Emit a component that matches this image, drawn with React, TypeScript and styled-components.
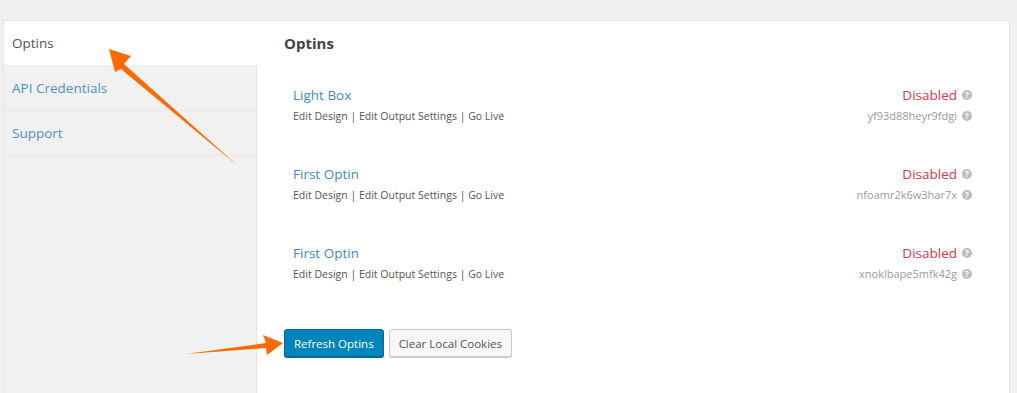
import React from "react";
import styled, { createGlobalStyle } from "styled-components";

const Global = createGlobalStyle`
  html, body { margin: 0; padding: 0; background: #f0f0f1; }
  body { font-family: "Open Sans", "Noto Sans", sans-serif; }
`;

const Page = styled.div`
  position: relative;
  width: 1017px;
  height: 393px;
  overflow: hidden;
  background: #f0f0f1;
  padding: 20px 7px 0 3px;
  box-sizing: border-box;
`;

const Frame = styled.div`
  display: flex;
  height: 100%;
  border: 1px solid #e4e4e6;
  border-bottom: none;
  box-sizing: border-box;
`;

const Sidebar = styled.nav`
  width: 252px;
  display: flex;
  flex-direction: column;
  background: #f1f1f1;
  border-right: 1px solid #e2e2e4;
`;

const Tab = styled.div<{ $active?: boolean }>`
  height: 45px;
  box-sizing: border-box;
  display: flex;
  align-items: center;
  padding: 0 0 0 8px;
  font-size: 13.5px;
  color: ${(p) => (p.$active ? "#555" : "#4f93c0")};
  background: ${(p) => (p.$active ? "#fff" : "#f1f1f1")};
  border-bottom: 1px solid ${(p) => (p.$active ? "#f2f2f2" : "#e7e7e9")};
  margin-right: ${(p) => (p.$active ? "-1px" : "0")};
`;

const Content = styled.main`
  flex: 1;
  background: #fff;
  padding: 10px 37px 0 27px;
  display: flex;
  flex-direction: column;
`;

const Heading = styled.h2`
  margin: 0;
  font-size: 15px;
  font-weight: 700;
  color: #444;
  line-height: 24px;
`;

const List = styled.div`
  display: flex;
  flex-direction: column;
  margin-top: 30px;
`;

const Row = styled.div`
  display: flex;
  justify-content: space-between;
  height: 79px;
  padding-left: 9px;
`;

const Left = styled.div`
  display: flex;
  flex-direction: column;
  gap: 3px;
`;

const Title = styled.a`
  font-size: 13.5px;
  color: #3d8cbf;
  line-height: 20px;
  text-decoration: none;
`;

const Actions = styled.div`
  font-size: 10.5px;
  color: #555;
  line-height: 16px;
`;

const Right = styled.div`
  display: flex;
  flex-direction: column;
  align-items: flex-end;
  gap: 3px;
`;

const Meta = styled.div<{ $status?: boolean }>`
  display: flex;
  align-items: center;
  gap: 5px;
  line-height: ${(p) => (p.$status ? "20px" : "16px")};
  font-size: ${(p) => (p.$status ? "13.5px" : "11px")};
  color: ${(p) => (p.$status ? "#dc3545" : "#9a9a9a")};
`;

const Help = styled.span`
  width: 10px;
  height: 10px;
  border-radius: 50%;
  background: #bdbdbd;
  color: #fff;
  font-size: 8px;
  font-weight: 700;
  display: inline-flex;
  align-items: center;
  justify-content: center;
  line-height: 1;
`;

const Buttons = styled.div`
  display: flex;
  gap: 5px;
  margin-top: 7px;
`;

const Button = styled.button<{ $primary?: boolean }>`
  height: 28px;
  padding: 0 9px;
  font-family: inherit;
  font-size: 11.5px;
  border-radius: 3px;
  cursor: pointer;
  color: ${(p) => (p.$primary ? "#fff" : "#555")};
  background: ${(p) => (p.$primary ? "#0085ba" : "#f7f7f7")};
  border: 1px solid ${(p) => (p.$primary ? "#006b97" : "#cccccc")};
  box-shadow: ${(p) => (p.$primary ? "0 1px 0 #006799" : "0 1px 0 #ccc")};
`;

const Arrows = styled.svg`
  position: absolute;
  left: 0;
  top: 0;
  pointer-events: none;
`;

const rows = [
  { title: "Light Box", code: "yf93d88heyr9fdgi" },
  { title: "First Optin", code: "nfoamr2k6w3har7x" },
  { title: "First Optin", code: "xnoklbape5mfk42g" },
];

export default function App() {
  return (
    <Page>
      <Global />
      <Frame>
        <Sidebar>
          <Tab $active>Optins</Tab>
          <Tab>API Credentials</Tab>
          <Tab>Support</Tab>
        </Sidebar>
        <Content>
          <Heading>Optins</Heading>
          <List>
            {rows.map((r, i) => (
              <Row key={i}>
                <Left>
                  <Title>{r.title}</Title>
                  <Actions>Edit Design | Edit Output Settings | Go Live</Actions>
                </Left>
                <Right>
                  <Meta $status>
                    Disabled <Help>?</Help>
                  </Meta>
                  <Meta>
                    {r.code} <Help>?</Help>
                  </Meta>
                </Right>
              </Row>
            ))}
          </List>
          <Buttons>
            <Button $primary>Refresh Optins</Button>
            <Button>Clear Local Cookies</Button>
          </Buttons>
        </Content>
      </Frame>
      <Arrows width="1017" height="393" viewBox="0 0 1017 393">
        <polygon points="238,166 121,69 115,72 109,49 131,56 124,64" fill="#ff6a00" />
        <polygon points="186,354 266,343 263,335 283,343 267,355 266,348" fill="#ff6a00" />
      </Arrows>
    </Page>
  );
}
